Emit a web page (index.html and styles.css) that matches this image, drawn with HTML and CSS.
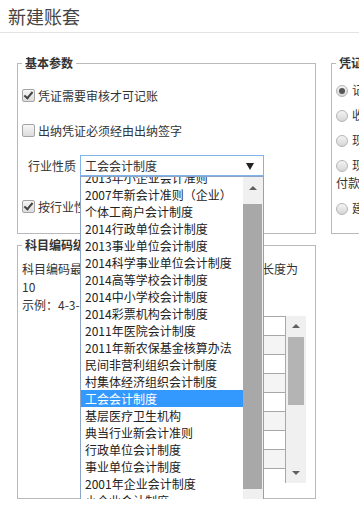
FILE: index.html
```html
<!DOCTYPE html>
<html lang="zh-CN">
<head>
  <meta charset="UTF-8" />
  <meta name="viewport" content="width=device-width, initial-scale=1.0"/>
  <title>新建账套</title>
  <link rel="stylesheet" href="styles.css">
</head>
<body>

  <div class="page-header">
    <h1>新建账套</h1>
  </div>

  <div class="page-body">
    <div class="col-left">
      <fieldset class="group group-basic">
        <legend>基本参数</legend>
        <label class="check-row"><span class="checkbox checked"></span>凭证需要审核才可记账</label>
        <label class="check-row"><span class="checkbox"></span>出纳凭证必须经由出纳签字</label>

        <div class="select-row">
          <span class="select-label">行业性质</span>
          <div class="select">
            <div class="select-value">工会会计制度<span class="select-arrow"></span></div>
            <div class="select-list">
              <ul class="options">
                <li>2013年小企业会计准则</li>
                <li>2007年新会计准则（企业）</li>
                <li>个体工商户会计制度</li>
                <li>2014行政单位会计制度</li>
                <li>2013事业单位会计制度</li>
                <li>2014科学事业单位会计制度</li>
                <li>2014高等学校会计制度</li>
                <li>2014中小学校会计制度</li>
                <li>2014彩票机构会计制度</li>
                <li>2011年医院会计制度</li>
                <li>2011年新农保基金核算办法</li>
                <li>民间非营利组织会计制度</li>
                <li>村集体经济组织会计制度</li>
                <li class="selected">工会会计制度</li>
                <li>基层医疗卫生机构</li>
                <li>典当行业新会计准则</li>
                <li>行政单位会计制度</li>
                <li>事业单位会计制度</li>
                <li>2001年企业会计制度</li>
                <li>小企业会计制度</li>
                <li>建设单位会计制度</li>
              </ul>
              <div class="scrollbar list-scroll">
                <div class="sb-btn"><span class="arrow-up"></span></div>
                <div class="sb-track"><div class="sb-thumb"></div></div>
                <div class="sb-btn"><span class="arrow-down"></span></div>
              </div>
            </div>
          </div>
        </div>

        <label class="check-row"><span class="checkbox checked"></span>按行业性质预置会计科目</label>
      </fieldset>

      <fieldset class="group group-code">
        <legend>科目编码级次</legend>
        <p class="code-note">科目编码最大级数为六级，每级科目编码最大长度为<br>10<br>示例：4-3-3-3-3</p>
        <div class="code-table">
          <div class="code-rows">
            <div class="code-row"></div>
            <div class="code-row"></div>
            <div class="code-row"></div>
            <div class="code-row"></div>
            <div class="code-row"></div>
            <div class="code-row"></div>
            <div class="code-row"></div>
            <div class="code-row"></div>
            <div class="code-row"></div>
          </div>
          <div class="scrollbar table-scroll">
            <div class="sb-btn"><span class="arrow-up"></span></div>
            <div class="sb-track"><div class="sb-thumb"></div></div>
            <div class="sb-btn"><span class="arrow-down"></span></div>
          </div>
        </div>
      </fieldset>
    </div>

    <fieldset class="group group-voucher">
      <legend>凭证类型</legend>
      <label class="radio-row"><span class="radio checked"></span>记账凭证</label>
      <label class="radio-row"><span class="radio"></span>收款凭证、付款凭证、转账凭证</label>
      <label class="radio-row"><span class="radio"></span>现金凭证、银行凭证、转账凭证</label>
      <label class="radio-row"><span class="radio"></span>现金收款、现金付款、银行收款、银行<br>付款、转账凭证</label>
      <label class="radio-row"><span class="radio"></span>建立自定义凭证字</label>
    </fieldset>
  </div>

</body>
</html>
```

FILE: styles.css
```css
body {
  margin: 0;
  font-family: "Noto Sans CJK SC", "Microsoft YaHei", sans-serif;
  font-size: 12px;
  color: #333;
  background: #fff;
  overflow: hidden;
}

.page-header {
  height: 32px;
  border-bottom: 1px solid #e3e3e3;
}

.page-header h1 {
  margin: 0;
  padding-left: 8px;
  font-size: 18px;
  font-weight: normal;
  line-height: 32px;
  color: #444;
}

.page-body {
  display: flex;
  align-items: flex-start;
  gap: 15px;
  padding: 22px 0 0 17px;
}

.col-left {
  flex-shrink: 0;
  width: 299px;
}

.group {
  box-sizing: border-box;
  margin: 0;
  min-width: 0;
  border: 1px solid #b9b9b9;
  padding: 0 4px;
}

.group legend {
  padding: 0 3px;
  font-weight: bold;
  line-height: 16px;
  color: #333;
  white-space: nowrap;
}

.group-basic {
  width: 299px;
  padding-top: 14px;
  padding-bottom: 17px;
}

.check-row {
  display: flex;
  align-items: center;
  height: 20px;
  margin-bottom: 15px;
}

.check-row:last-child {
  margin-bottom: 0;
}

.checkbox {
  position: relative;
  box-sizing: border-box;
  width: 13px;
  height: 13px;
  margin-right: 3px;
  border: 1px solid #a4a4a4;
  border-radius: 2px;
  background: linear-gradient(#f6f6f6, #dcdcdc);
}

.checkbox.checked::after {
  content: "";
  position: absolute;
  left: 3px;
  top: 0;
  width: 3px;
  height: 7px;
  border-right: 2px solid #444;
  border-bottom: 2px solid #444;
  transform: rotate(40deg);
}

.select-row {
  display: flex;
  align-items: center;
  height: 21px;
  margin-bottom: 20px;
  padding-left: 6px;
}

.select-label {
  margin-right: 4px;
}

.select {
  position: relative;
  width: 184px;
}

.select-value {
  position: relative;
  box-sizing: border-box;
  height: 21px;
  padding-left: 4px;
  line-height: 19px;
  border: 1px solid #7eb4ea;
  background: #fff;
}

.select-arrow {
  position: absolute;
  right: 9px;
  top: 7px;
  border-left: 4px solid transparent;
  border-right: 4px solid transparent;
  border-top: 7px solid #222;
}

.select-list {
  position: absolute;
  top: 100%;
  left: 0;
  z-index: 10;
  box-sizing: border-box;
  display: flex;
  width: 184px;
  height: 342px;
  border: 1px solid #8aa3c7;
  background: #fff;
  overflow: hidden;
}

.options {
  flex: 1;
  margin: -8px 0 0;
  padding: 0;
  list-style: none;
}

.options li {
  height: 17px;
  padding-left: 4px;
  line-height: 17px;
  white-space: nowrap;
  color: #222;
}

.options li.selected {
  background: #3399ff;
  color: #fff;
}

.scrollbar {
  display: flex;
  flex-direction: column;
  flex-shrink: 0;
  width: 20px;
  background: #f0f0f0;
}

.sb-btn {
  display: flex;
  align-items: center;
  justify-content: center;
  height: 22px;
}

.sb-track {
  flex: 1;
  padding-top: 5px;
}

.sb-thumb {
  margin: 0 1px 0 0;
  background: #a8a8a8;
}

.list-scroll .sb-thumb {
  height: 285px;
}

.arrow-up {
  border-left: 4px solid transparent;
  border-right: 4px solid transparent;
  border-bottom: 4px solid #606060;
}

.arrow-down {
  border-left: 4px solid transparent;
  border-right: 4px solid transparent;
  border-top: 4px solid #606060;
}

.group-code {
  width: 299px;
  margin-top: 3px;
  padding-top: 7px;
  padding-bottom: 15px;
}

.code-note {
  margin: 0;
  line-height: 18px;
}

.code-table {
  display: flex;
  width: 221px;
  height: 167px;
  margin: 2px 0 0 63px;
  overflow: hidden;
}

.code-rows {
  box-sizing: border-box;
  width: 201px;
  border-top: 1px solid #a8a8a8;
  border-right: 1px solid #a8a8a8;
}

.code-row {
  height: 18px;
  border-bottom: 1px solid #a8a8a8;
}

.code-row:nth-child(even) {
  background: #f4f4f4;
}

.table-scroll .sb-btn {
  height: 20px;
}

.table-scroll .sb-track {
  padding-top: 1px;
}

.table-scroll .sb-thumb {
  height: 68px;
  margin: 0 2px;
  background: #b4b4b4;
}

.group-voucher {
  flex-shrink: 0;
  width: 220px;
  padding-top: 10px;
  padding-bottom: 16px;
}

.radio-row {
  display: block;
  line-height: 18px;
  margin-bottom: 7px;
  white-space: nowrap;
}

.radio-row:last-child {
  margin-bottom: 0;
}

.radio {
  position: relative;
  display: inline-block;
  box-sizing: border-box;
  width: 12px;
  height: 12px;
  margin-right: 4px;
  vertical-align: -2px;
  border: 1px solid #b5b5b5;
  border-radius: 50%;
  background: linear-gradient(#f4f4f4, #d6d6d6);
}

.radio.checked::after {
  content: "";
  position: absolute;
  left: 2px;
  top: 2px;
  width: 6px;
  height: 6px;
  border-radius: 50%;
  background: #555;
}
```
